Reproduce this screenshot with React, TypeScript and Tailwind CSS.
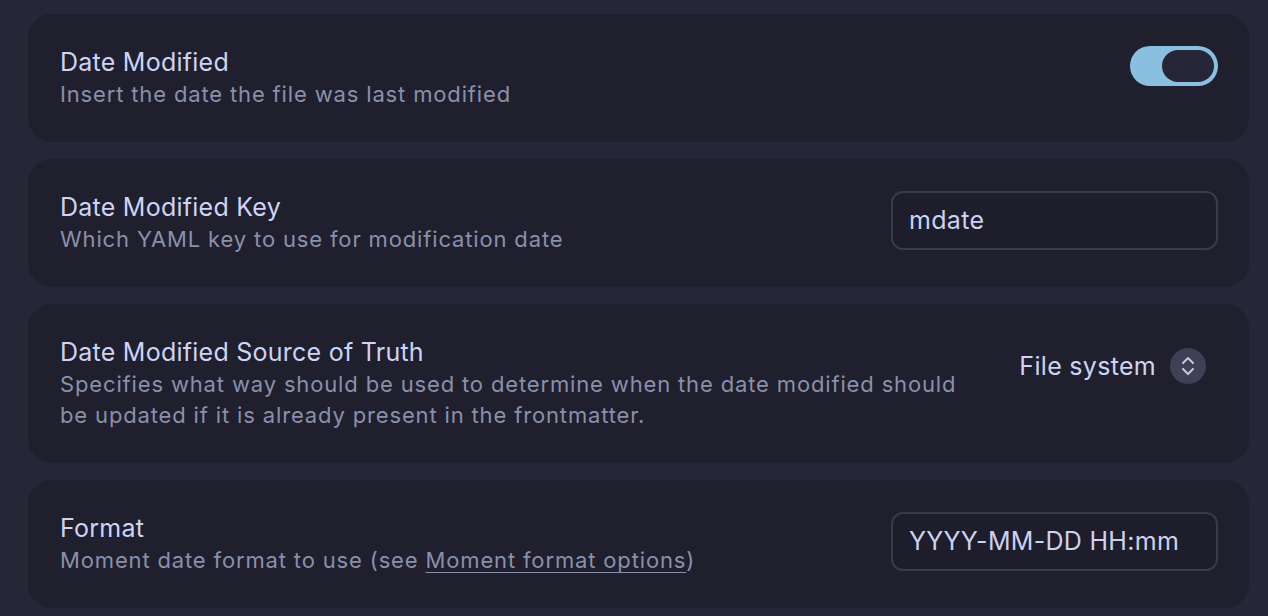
import React from 'react';

const font = { fontFamily: 'Inter, "Noto Sans", sans-serif' };

const Card = ({ children }: { children: React.ReactNode }) => (
  <div className="flex items-start justify-between gap-[40px] rounded-[24px] bg-[#1f1f2e] pt-[33px] pb-[32px] pl-[32px] pr-[31px]">
    {children}
  </div>
);

const Info = ({ title, children }: { title: string; children: React.ReactNode }) => (
  <div className="min-w-0 flex-1">
    <div className="text-[25px] leading-[31px] tracking-[0.25px] text-[#cdd4f4]">{title}</div>
    <div className="pt-[1px] text-[22px] leading-[31px] tracking-[0.85px] text-[#8b90aa]">{children}</div>
  </div>
);

const TextInput = ({ value }: { value: string }) => (
  <div className="-mt-[1px] -mb-[1px] flex h-[59px] w-[327px] shrink-0 items-center rounded-[12px] border-2 border-[#3a3a4e] bg-[#1d1d2b] px-[16px] text-[25px] tracking-[0.3px] text-[#cbd2f2]">
    {value}
  </div>
);

const App = () => {
  return (
    <div className="h-[616px] w-full overflow-hidden bg-[#262637] px-[28px] pt-[14px]" style={font}>
      <div className="flex w-[1221px] flex-col gap-[17px]">
        {/* Date Modified */}
        <Card>
          <Info title="Date Modified">Insert the date the file was last modified</Info>
          <div className="relative -mt-[1px] h-[40px] w-[88px] shrink-0 rounded-full bg-[#8bbfe0]">
            <div className="absolute right-[4px] top-[4px] h-[32px] w-[52px] rounded-full bg-[#262637]" />
          </div>
        </Card>

        {/* Key */}
        <Card>
          <Info title="Date Modified Key">Which YAML key to use for modification date</Info>
          <TextInput value="mdate" />
        </Card>

        {/* Source of truth */}
        <Card>
          <Info title="Date Modified Source of Truth">
            Specifies what way should be used to determine when the date modified should be updated if it is already present in the frontmatter.
          </Info>
          <div className="mt-[11px] flex shrink-0 items-center gap-[14px] pr-[12px]">
            <span className="text-[25px] leading-[36px] tracking-[0.3px] text-[#cdd4f4]">File system</span>
            <div className="flex h-[36px] w-[36px] items-center justify-center rounded-full bg-[#3f4055]">
              <svg width="16" height="22" viewBox="0 0 16 22" fill="none" stroke="#c4c8dc" strokeWidth="2" strokeLinecap="round" strokeLinejoin="round">
                <path d="M3 8l5-5 5 5" />
                <path d="M3 14l5 5 5-5" />
              </svg>
            </div>
          </div>
        </Card>

        {/* Format */}
        <Card>
          <Info title="Format">
            Moment date format to use (see{' '}
            <span className="underline decoration-1 underline-offset-[4px]">Moment format options</span>)
          </Info>
          <TextInput value="YYYY-MM-DD HH:mm" />
        </Card>
      </div>
    </div>
  );
};

export default App;
